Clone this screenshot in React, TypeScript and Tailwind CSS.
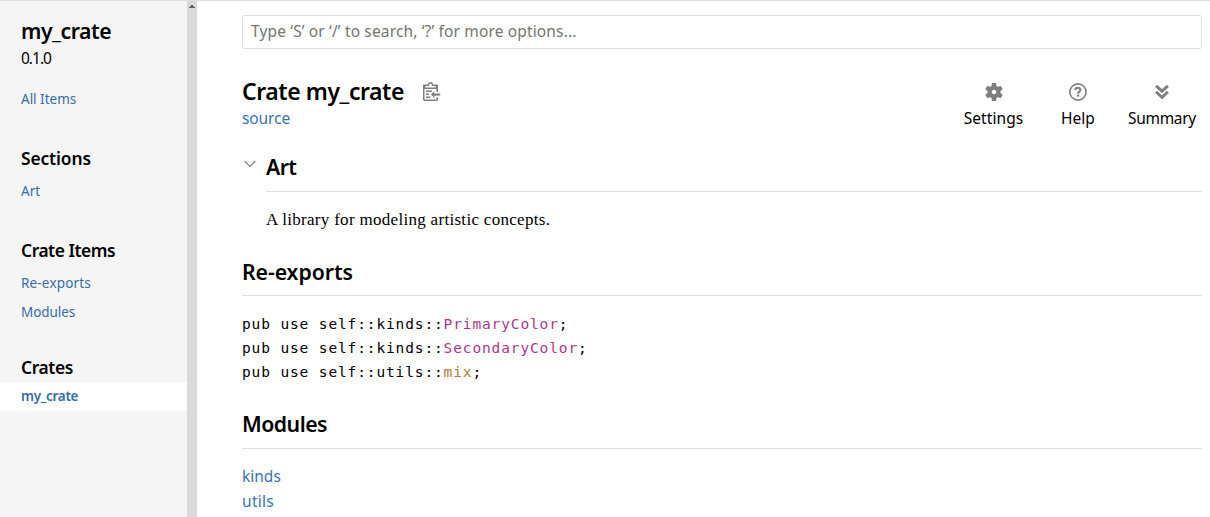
import type { ReactNode } from "react";

function SideLink({ children, className = "" }: { children: ReactNode; className?: string }) {
  return (
    <a href="#" className={`block h-[29px] pl-[21px] text-[13.5px] leading-[29px] text-[#356da4] ${className}`}>
      {children}
    </a>
  );
}

function SideHeading({ children, className = "" }: { children: ReactNode; className?: string }) {
  return <h3 className={`pl-[21px] text-[17.4px] leading-[22px] font-semibold ${className}`}>{children}</h3>;
}

function SectionHeading({ children, className = "" }: { children: ReactNode; className?: string }) {
  return (
    <h2 className={`h-[39px] border-b border-[#dddddd] text-[21.25px] leading-[28px] font-semibold ${className}`}>
      {children}
    </h2>
  );
}

function ClipboardIcon() {
  return (
    <svg width="18" height="19" viewBox="0 0 24 25" fill="#7f7f7f">
      <path d="M18 20h2v3c0 1-1 2-2 2H2c-.998 0-2-1-2-2V5c0-.911.755-1.667 1.667-1.667h5A3.323 3.323 0 0110 0a3.323 3.323 0 013.333 3.333h5C19.245 3.333 20 4.09 20 5v8.333h-2V9H2v14h16v-3zM3 7h14c0-.911-.793-1.667-1.75-1.667H13.5c-.957 0-1.75-.755-1.75-1.666C11.75 2.755 10.957 2 10 2s-1.75.755-1.75 1.667c0 .911-.793 1.666-1.75 1.666H4.75C3.793 5.333 3 6.09 3 7z" />
      <path d="M4 19h6v2H4zM12 11H4v2h8zM4 17h4v-2H4zM15 15v-3l-4.5 4.5L15 21v-3l8.027-.032L23 15z" />
    </svg>
  );
}

function GearIcon() {
  return (
    <svg width="18" height="18" viewBox="0 0 12 12" fill="#7f7f7f">
      <path d="M10.25,6c0-0.1243286-0.0261841-0.241333-0.0366211-0.362915l1.6077881-1.5545654l-1.25-2.1650391 c0,0-1.2674561,0.3625488-2.1323853,0.6099854c-0.2034912-0.1431885-0.421875-0.2639771-0.6494751-0.3701782L7.25,0h-2.5 c0,0-0.3214111,1.2857666-0.5393066,2.1572876C3.9830933,2.2634888,3.7647095,2.3842773,3.5612183,2.5274658L1.428833,1.9174805 l-1.25,2.1650391c0,0,0.9641113,0.9321899,1.6077881,1.5545654C1.7761841,5.758667,1.75,5.8756714,1.75,6 s0.0261841,0.241333,0.0366211,0.362915L0.178833,7.9174805l1.25,2.1650391l2.1323853-0.6099854 c0.2034912,0.1432495,0.421875,0.2639771,0.6494751,0.3701782L4.75,12h2.5l0.5393066-2.1572876 c0.2276001-0.1062012,0.4459839-0.2269287,0.6494751-0.3701782l2.1323853,0.6099854l1.25-2.1650391L10.2133789,6.362915 C10.2238159,6.241333,10.25,6.1243286,10.25,6z M6,7.5C5.1715698,7.5,4.5,6.8284302,4.5,6S5.1715698,4.5,6,4.5S7.5,5.1715698,7.5,6 S6.8284302,7.5,6,7.5z" />
    </svg>
  );
}

function HelpIcon() {
  return (
    <svg width="18" height="18" viewBox="0 0 12 12" fill="none" stroke="#7f7f7f">
      <circle cx="6" cy="6" r="5.4" strokeWidth="1.1" />
      <path d="M4.2 4.7C4.3 2.7 7.6 2.7 7.6 4.6C7.6 5.8 6.1 5.7 6.1 7.1" strokeWidth="1.4" />
      <path d="M6.1 7.7v1.4" strokeWidth="1.4" />
    </svg>
  );
}

function SummaryIcon() {
  return (
    <svg width="18" height="18" viewBox="0 0 18 18" fill="none" stroke="#7f7f7f" strokeWidth="3">
      <path d="M3.1 2.8L9 8.2l5.9-5.4M3.1 8.9L9 14.3L14.9 8.9" />
    </svg>
  );
}

function Tool({ icon, children, className = "" }: { icon: ReactNode; children: ReactNode; className?: string }) {
  return (
    <a href="#" className={`flex flex-col items-center text-[15.5px] leading-[20px] ${className}`}>
      <span className="mb-[7px] block h-[18px]">{icon}</span>
      {children}
    </a>
  );
}

export default function App() {
  return (
    <div className="flex h-[517px] overflow-hidden border-t border-[#dddddd] bg-white font-['Noto_Sans','Open_Sans',sans-serif] text-black">
      <nav className="w-[187px] shrink-0 bg-[#f5f5f5] pt-4">
        <h2 className="pl-[21px] text-[21.25px] leading-[28px] font-semibold tracking-[-0.48px]">my_crate</h2>
        <p className="mt-[3px] pl-[21px] text-[15.5px] leading-[20px] tracking-[-1px]">0.1.0</p>
        <SideLink className="mt-[17px]">All Items</SideLink>
        <SideHeading className="mt-[33px] tracking-[-0.12px]">Sections</SideHeading>
        <SideLink className="mt-2">Art</SideLink>
        <SideHeading className="mt-[33px] tracking-[-0.45px]">Crate Items</SideHeading>
        <SideLink className="mt-2 tracking-[0.17px]">Re-exports</SideLink>
        <SideLink className="tracking-[-0.05px]">Modules</SideLink>
        <SideHeading className="mt-[29px] tracking-[-0.38px]">Crates</SideHeading>
        <SideLink className="mt-1 bg-white font-semibold tracking-[-0.32px]">my_crate</SideLink>
      </nav>
      <div className="flex w-[10px] shrink-0 justify-center bg-[#d9d9d9] pt-1">
        <svg width="6" height="3" viewBox="0 0 6 3" fill="#666666">
          <path d="M2 0h2v1h1v1h1v1H0V2h1V1h1z" />
        </svg>
      </div>
      <main className="min-w-0 flex-1 pt-[14px] pr-2 pl-[45px]">
        <input
          type="text"
          placeholder="Type ‘S’ or ‘/’ to search, ‘?’ for more options..."
          className="block h-[34px] w-full rounded-[2px] border border-[#e0e0e0] bg-white px-2 pb-[2px] text-[15.5px] tracking-[0.15px] placeholder:text-[#757575]"
        />
        <header className="mt-[27px] flex justify-between">
          <div>
            <div className="flex h-[30px] items-start">
              <h1 className="w-[162px] text-[23px] leading-[30px] font-semibold tracking-[-0.44px] whitespace-nowrap">Crate my_crate</h1>
              <button className="mt-[6px] ml-[18.5px]" aria-label="Copy item path">
                <ClipboardIcon />
              </button>
            </div>
            <a href="#" className="mt-[2px] block text-[15.5px] leading-[20px] tracking-[-0.1px] text-[#3873ad]">
              source
            </a>
          </div>
          <div className="mt-[7px] flex pr-[5px]">
            <Tool icon={<GearIcon />} className="w-[61px] tracking-[0.08px]">Settings</Tool>
            <Tool icon={<HelpIcon />} className="ml-[36px] w-[36px]">Help</Tool>
            <Tool icon={<SummaryIcon />} className="ml-[31px] w-[70px] tracking-[-0.3px]">Summary</Tool>
          </div>
        </header>
        <section className="mt-[25px] flex">
          <svg className="mt-[7px] ml-[2px] mr-[9px] shrink-0" width="13" height="8" viewBox="0 0 13 8" fill="none" stroke="#7f7f7f" strokeWidth="1.2">
            <path d="M0.6 1L6 6.4L11.4 1" />
          </svg>
          <div className="flex-1">
            <SectionHeading className="tracking-[-0.6px]">Art</SectionHeading>
            <p className="mt-4 font-['Liberation_Serif',serif] text-[17px] leading-6 tracking-[0.3px]">
              A library for modeling artistic concepts.
            </p>
          </div>
        </section>
        <SectionHeading className="mt-[25px] pt-px tracking-[-0.07px]">Re-exports</SectionHeading>
        <div className="mt-[16px] font-['DejaVu_Sans_Mono',monospace] text-[14.5px] leading-6 tracking-[0.87px]">
          <p>pub use self::kinds::<a href="#" className="text-[#ad378a]">PrimaryColor</a>;</p>
          <p>pub use self::kinds::<a href="#" className="text-[#ad378a]">SecondaryColor</a>;</p>
          <p>pub use self::utils::<a href="#" className="text-[#ad7c37]">mix</a>;</p>
        </div>
        <SectionHeading className="mt-[26px] tracking-[-0.52px]">Modules</SectionHeading>
        <ul className="mt-[15px] text-[15.5px] leading-[25px] text-[#3873ad]">
          <li><a href="#">kinds</a></li>
          <li className="tracking-[0.3px]"><a href="#">utils</a></li>
        </ul>
      </main>
    </div>
  );
}
